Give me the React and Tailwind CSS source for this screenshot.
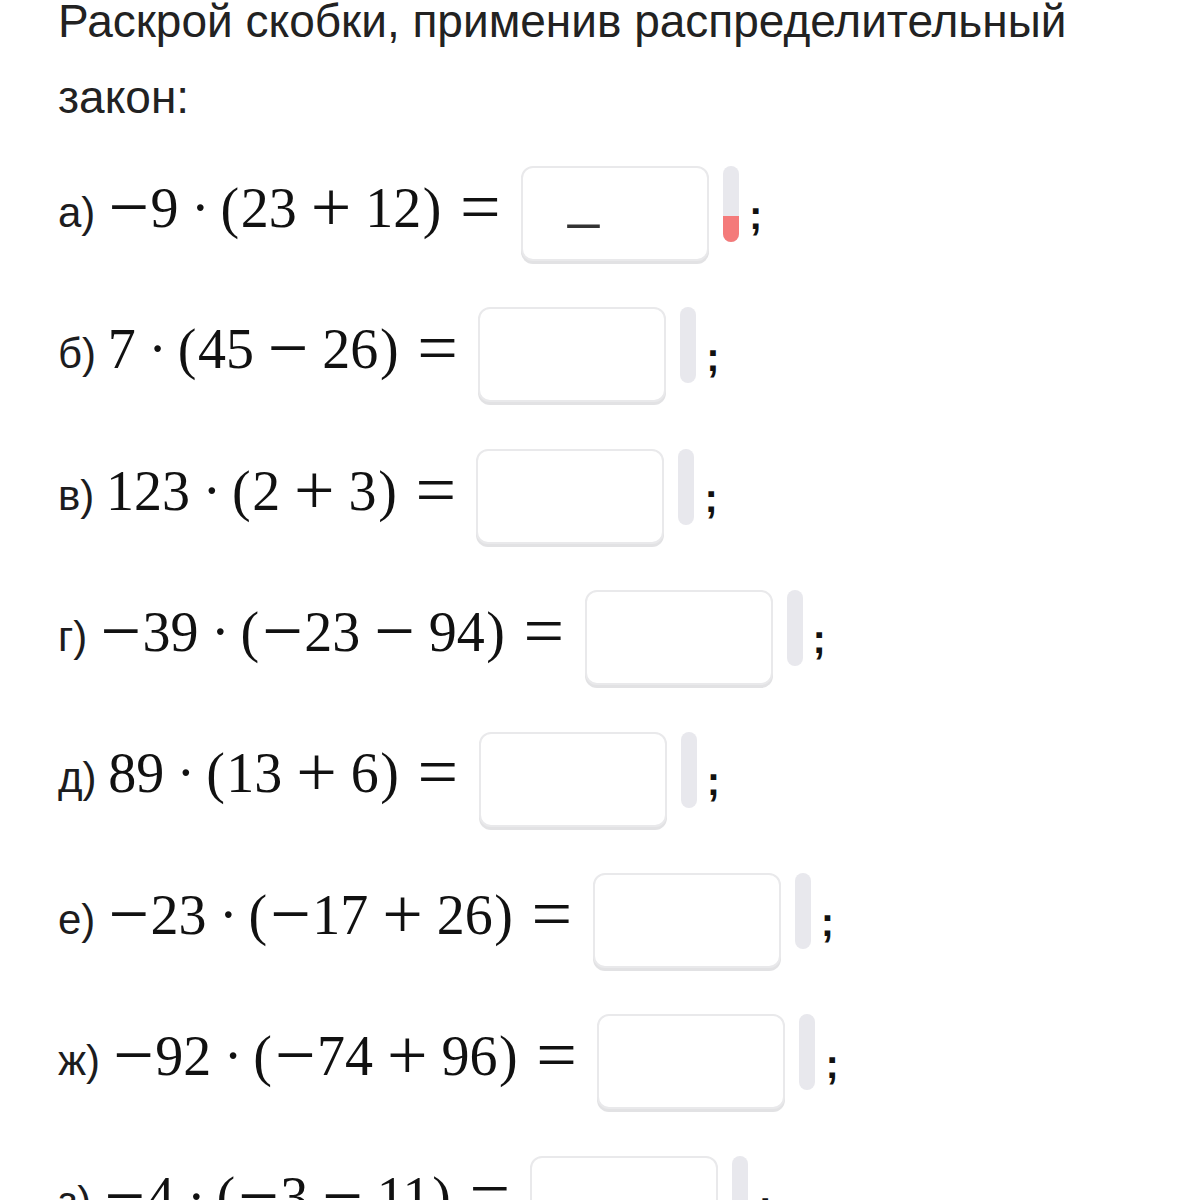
import React from 'react'

const rows = [
  { label: 'а)', expr: '−9·(23+12)=', box: '_', fill: true },
  { label: 'б)', expr: '7·(45−26)=' },
  { label: 'в)', expr: '123·(2+3)=' },
  { label: 'г)', expr: '−39·(−23−94)=' },
  { label: 'д)', expr: '89·(13+6)=' },
  { label: 'е)', expr: '−23·(−17+26)=' },
  { label: 'ж)', expr: '−92·(−74+96)=' },
  { label: 'з)', expr: '−4·(−3−11)=' },
]

// split an expression into tokens with KaTeX-like spacing
function tokens(expr) {
  const out = []
  let num = ''
  const flush = () => { if (num) { out.push({ k: 'ord', v: num }); num = '' } }
  for (let i = 0; i < expr.length; i++) {
    const c = expr[i]
    if (/[0-9]/.test(c)) { num += c; continue }
    flush()
    const prev = out[out.length - 1]
    if (c === '(' || c === ')') out.push({ k: 'par', v: c })
    else if (c === '=') out.push({ k: 'rel', v: c })
    else if (c === '·') out.push({ k: 'dot', v: c })
    else if (c === '−' && (!prev || prev.v === '(')) out.push({ k: 'un', v: c })
    else out.push({ k: 'bin', v: c })
  }
  flush()
  return out
}

const big = 'relative top-[4px] text-[72px] leading-[0]'

function Tok({ t }) {
  if (t.k === 'ord') return <span>{t.v}</span>
  if (t.k === 'par') return <span className="inline-block w-[0.389em] text-center">{t.v}</span>
  // trailing relation: no space after it
  if (t.k === 'rel') return <span className="inline-block w-[0.778em] ml-[0.278em] text-center"><span className={big}>{t.v}</span></span>
  if (t.k === 'dot') return <span className="inline-block w-[0.278em] mx-[0.222em] text-center">{t.v}</span>
  if (t.k === 'un') return <span className="inline-block w-[0.778em] text-center"><span className={big}>{t.v}</span></span>
  return <span className="inline-block w-[0.778em] mx-[0.222em] text-center"><span className={big}>{t.v}</span></span>
}

function Row({ r }) {
  return (
    <div className="flex items-center h-[94.7px]">
      <div className="pb-[11px] leading-none whitespace-nowrap text-[#1c1c1e] text-[42px]">
        {r.label}{' '}
        <span className="text-[56px] text-[#111]" style={{ fontFamily: '"Liberation Serif", "DejaVu Serif", serif' }}>
          {tokens(r.expr).map((t, i) => <Tok key={i} t={t} />)}
        </span>
      </div>
      <div className="ml-[19px] w-[188px] h-[95px] shrink-0 self-start rounded-[12px] border-2 border-[#e9e9eb] shadow-[0_3px_0_#e2e2e4] bg-white flex items-start pl-[45px] pt-[2px]">
        {r.box && <span className="text-[56px] leading-none text-[#333]">{r.box}</span>}
      </div>
      <div className="self-start ml-[14px] w-[16px] h-[76px] rounded-full bg-[#e8e8ed] overflow-hidden flex flex-col justify-end">
        {r.fill && <div className="h-[26px] bg-[#f47a7a]" />}
      </div>
      <span className="ml-[10px] pt-[4px] text-[40px] font-bold leading-none text-[#111]">;</span>
    </div>
  )
}

export default function App() {
  return (
    <div className="bg-white min-h-[1200px] px-[58px] overflow-hidden" style={{ fontFamily: '"Liberation Sans", Arial, sans-serif' }}>
      <h1 className="-mt-[17px] text-[46px] leading-[76px] text-[#222] font-normal">
        Раскрой скобки, применив распределительный<br />закон:
      </h1>
      <div className="mt-[31px] flex flex-col gap-[46.7px]">
        {rows.map(r => <Row key={r.label} r={r} />)}
      </div>
    </div>
  )
}
